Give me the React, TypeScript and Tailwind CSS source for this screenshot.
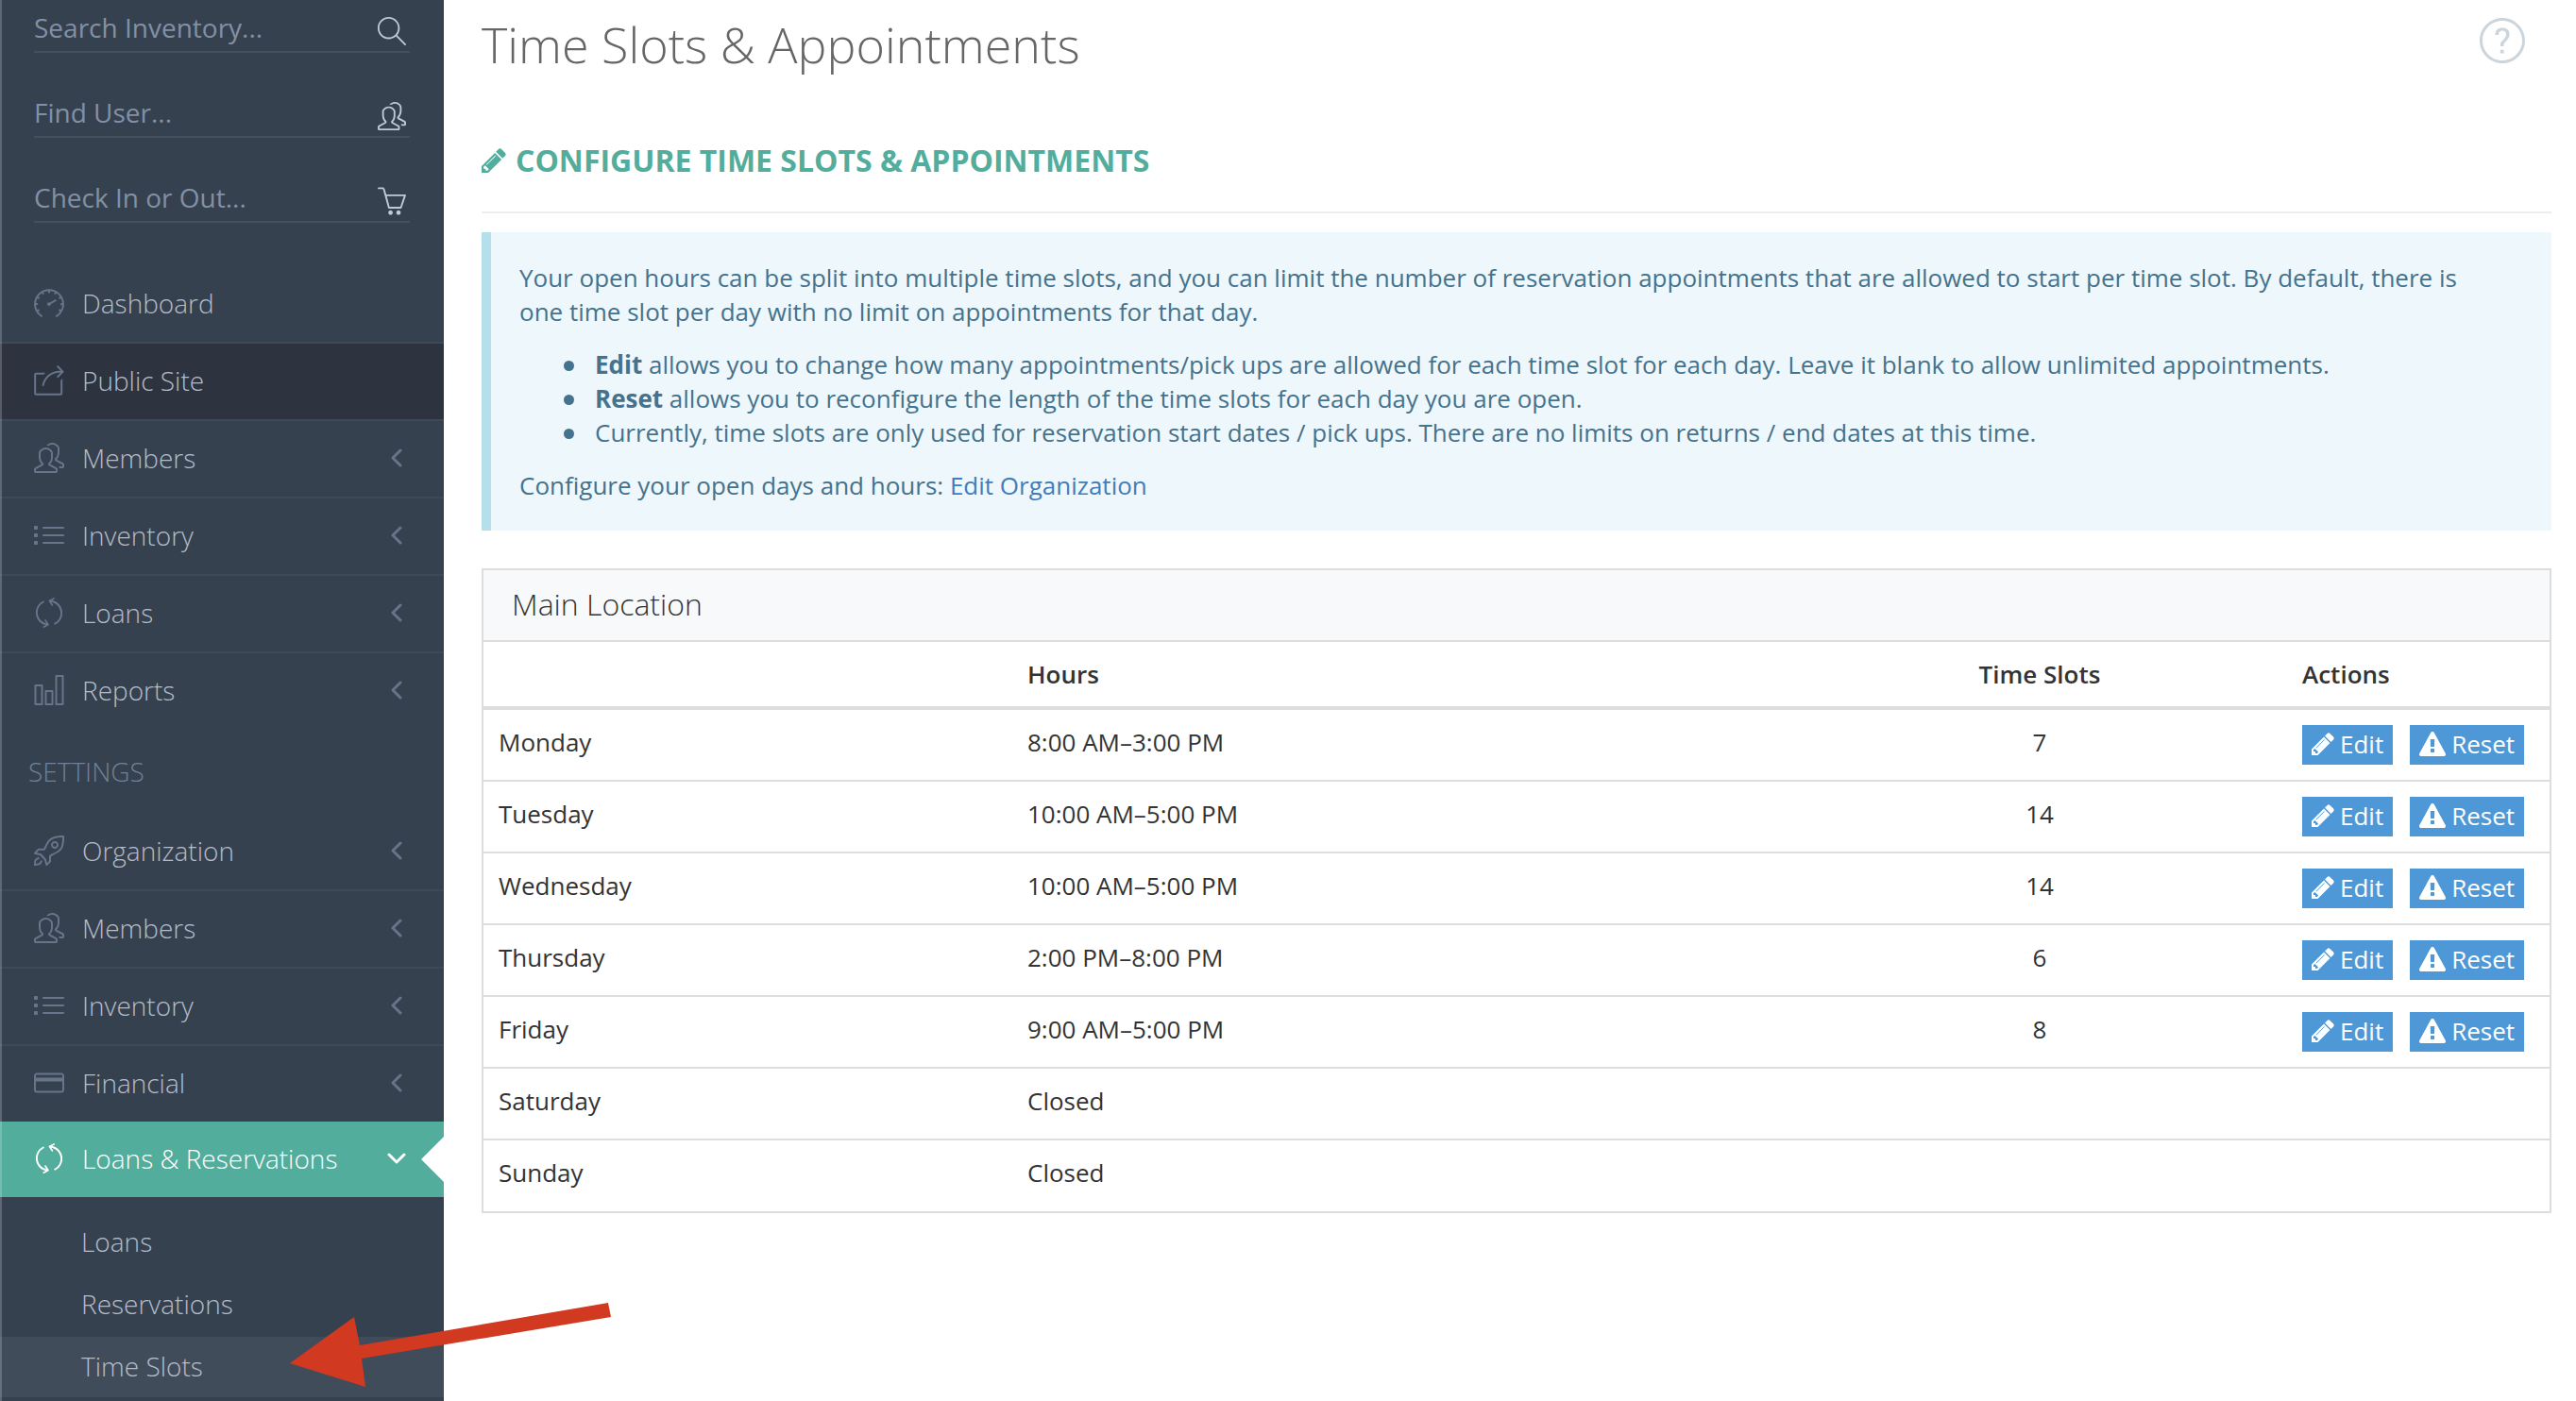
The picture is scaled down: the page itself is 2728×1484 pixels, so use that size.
import React from 'react';
import { IconType } from 'react-icons';
import {
  SlBasket,
  SlChart,
  SlCreditCard,
  SlList,
  SlMagnifier,
  SlPeople,
  SlQuestion,
  SlRefresh,
  SlRocket,
  SlShareAlt,
  SlSpeedometer,
} from 'react-icons/sl';

interface MenuItem {
  label: string;
  icon: IconType;
  children?: boolean;
  dark?: boolean;
}

interface DayRow {
  day: string;
  hours: string;
  slots?: number;
}

const searches: { id: string; label: string; icon: IconType }[] = [
  { id: 'search-inventory', label: 'Search Inventory...', icon: SlMagnifier },
  { id: 'find-user', label: 'Find User...', icon: SlPeople },
  { id: 'check-in-out', label: 'Check In or Out...', icon: SlBasket },
];

const mainMenu: MenuItem[] = [
  { label: 'Dashboard', icon: SlSpeedometer },
  { label: 'Public Site', icon: SlShareAlt, dark: true },
  { label: 'Members', icon: SlPeople, children: true },
  { label: 'Inventory', icon: SlList, children: true },
  { label: 'Loans', icon: SlRefresh, children: true },
  { label: 'Reports', icon: SlChart, children: true },
];

const settingsMenu: MenuItem[] = [
  { label: 'Organization', icon: SlRocket, children: true },
  { label: 'Members', icon: SlPeople, children: true },
  { label: 'Inventory', icon: SlList, children: true },
  { label: 'Financial', icon: SlCreditCard, children: true },
];

const subMenu = ['Loans', 'Reservations', 'Time Slots'];

const days: DayRow[] = [
  { day: 'Monday', hours: '8:00 AM–3:00 PM', slots: 7 },
  { day: 'Tuesday', hours: '10:00 AM–5:00 PM', slots: 14 },
  { day: 'Wednesday', hours: '10:00 AM–5:00 PM', slots: 14 },
  { day: 'Thursday', hours: '2:00 PM–8:00 PM', slots: 6 },
  { day: 'Friday', hours: '9:00 AM–5:00 PM', slots: 8 },
  { day: 'Saturday', hours: 'Closed' },
  { day: 'Sunday', hours: 'Closed' },
];

const PencilIcon = ({ className }: { className?: string }) => (
  <svg viewBox="128 128 1536 1536" fill="currentColor" className={className} aria-hidden="true">
    <path d="M491 1536l91-91-235-235-91 91v107h128v128h107zm523-928q0-22-22-22-10 0-17 7l-542 542q-7 7-7 17 0 22 22 22 10 0 17-7l542-542q7-7 7-17zm-54-192l416 416-832 832h-416v-416zm683 96q0 53-37 90l-166 166-416-416 166-165q36-38 90-38 53 0 91 38l235 234q37 39 37 91z" />
  </svg>
);

const WarningIcon = ({ className }: { className?: string }) => (
  <svg viewBox="0 0 1792 1664" fill="currentColor" className={className} aria-hidden="true">
    <path d="M1024 1375v-190q0-14-9.5-23.5t-22.5-9.5h-192q-13 0-22.5 9.5t-9.5 23.5v190q0 14 9.5 23.5t22.5 9.5h192q13 0 22.5-9.5t9.5-23.5zm-2-374l18-459q0-12-10-19-13-11-24-11h-220q-11 0-24 11-10 7-10 21l17 457q0 10 10 16.5t24 6.5h185q14 0 23.5-6.5t10.5-16.5zm-14-934l768 1408q35 63-2 126-17 29-46.5 46t-63.5 17h-1536q-34 0-63.5-17t-46.5-46q-37-63-2-126l768-1408q17-31 47-49t65-18 65 18 47 49z" />
  </svg>
);

const AngleIcon = ({ open }: { open?: boolean }) => (
  <svg
    viewBox="0 0 20 20"
    fill="none"
    stroke="currentColor"
    strokeWidth="3"
    strokeLinecap="round"
    strokeLinejoin="round"
    className="ml-auto size-5"
    aria-hidden="true"
  >
    {open ? <path d="M2 6l8 8 8-8" /> : <path d="M14 2l-8 8 8 8" />}
  </svg>
);

const MenuList = ({ items }: { items: MenuItem[] }) => (
  <ul>
    {items.map((item, i) => (
      <li key={item.label} className={i > 0 ? 'border-t-2 border-[#3e4959]' : 'border-t-2 border-transparent'}>
        <a
          href="#"
          className={`flex h-20 items-center pb-[2px] pl-9 pr-10 text-[28px] font-light text-[#b4bcc8] ${item.dark ? 'bg-[#2d3440]' : ''}`}
        >
          <item.icon className="mr-[19px] size-8 text-[#67748a]" />
          {item.label}
          {item.children && (
            <span className="ml-auto text-[#67748a]">
              <AngleIcon />
            </span>
          )}
        </a>
      </li>
    ))}
  </ul>
);

const Sidebar: React.FC = () => (
  <aside className="relative w-[470px] shrink-0 bg-[#364150]">
    <form className="flex flex-col gap-[34px] pl-9 pr-9">
      {searches.map(({ id, label, icon: Icon }) => (
        <div key={id} className="flex h-14 items-end border-b-2 border-[#435060] pr-1">
          <input
            id={id}
            type="text"
            aria-label={label}
            placeholder={label}
            className="h-full min-w-0 flex-1 bg-transparent pt-1 text-[28px] text-white outline-none placeholder:text-[#8290a5]"
          />
          <label htmlFor={id} className="mb-[6px] text-[#bfcad9]">
            <Icon className="size-[30px]" />
          </label>
        </div>
      ))}
    </form>

    <nav className="mt-11">
      <MenuList items={mainMenu} />
      <h3 className="flex h-[88px] items-center pl-[30px] pt-[2px] text-[28px] font-light uppercase text-[#708096]">Settings</h3>
      <MenuList items={settingsMenu} />

      {/* Active section */}
      <a href="#" className="relative flex h-20 items-center bg-[#52ad9c] pb-[2px] pl-9 pr-10 text-[28px] font-light text-white">
        <SlRefresh className="mr-[19px] size-8" />
        Loans &amp; Reservations
        <AngleIcon open />
        <svg viewBox="0 0 24 48" className="absolute right-0 top-4 h-12 w-6" fill="#fff" aria-hidden="true">
          <path d="M24 0v48L0 24z" />
        </svg>
      </a>
      <ul className="flex flex-col gap-[2px] pt-4">
        {subMenu.map(label => (
          <li key={label}>
            <a
              href="#"
              className={`flex h-16 items-center pb-[2px] pl-[86px] text-[28px] font-light text-[#b4bcc8] ${label === 'Time Slots' ? 'bg-[#414c5a]' : ''}`}
            >
              {label}
            </a>
          </li>
        ))}
      </ul>
    </nav>

    <div className="absolute inset-y-0 left-0 w-[2px] bg-white/20" />

    {/* Pointer to the current page */}
    <svg viewBox="0 0 342 92" className="absolute left-[306px] top-[1378px] z-10 h-[92px] w-[342px]" aria-hidden="true">
      <path d="M1 66L69 17L75 47L338 2L341 17L77 61L81 91Z" fill="#d13920" />
    </svg>
  </aside>
);

const noteItem = "relative before:absolute before:-left-[33px] before:top-[14px] before:size-[11px] before:rounded-full before:bg-[#45728c] before:content-['']";
const actionButton = 'flex h-[42px] items-center gap-[6px] bg-[#4f98d7] px-[10px] pb-[2px] text-white';

const App: React.FC = () => {
  return (
    <div className="flex min-h-screen bg-white font-['Open_Sans',sans-serif] text-[26px] leading-9 text-[#333]">
      <Sidebar />

      <main className="min-w-0 flex-1 pl-10 pr-[26px]">
        <div className="flex items-start justify-between pr-7">
          <h1 className="pt-3 text-[52px] font-light leading-[70px] text-[#666]">Time Slots &amp; Appointments</h1>
          <button type="button" aria-label="Help" className="mt-[19px] text-[#ccd5db]">
            <SlQuestion className="size-12" />
          </button>
        </div>

        <h2 className="mt-[60px] flex items-center border-b-2 border-[#eee] pb-[26px] text-[32px] font-bold uppercase leading-[56px] text-[#52ad9c]">
          <PencilIcon className="mr-[10px] size-[26px]" />
          Configure Time Slots &amp; Appointments
        </h2>

        <div className="mt-5 border-l-[10px] border-[#b3e0ea] bg-[#eef7fb] p-[30px] text-[#45728c]">
          <p className="pr-10">
            Your open hours can be split into multiple time slots, and you can limit the number of reservation appointments that are allowed to start per time slot. By default, there is one time slot per day with no limit on appointments for that day.
          </p>
          <ul className="my-5 pl-20">
            <li className={noteItem}><b>Edit</b> allows you to change how many appointments/pick ups are allowed for each time slot for each day. Leave it blank to allow unlimited appointments.</li>
            <li className={noteItem}><b>Reset</b> allows you to reconfigure the length of the time slots for each day you are open.</li>
            <li className={noteItem}>Currently, time slots are only used for reservation start dates / pick ups. There are no limits on returns / end dates at this time.</li>
          </ul>
          <p>
            Configure your open days and hours: <a href="#" className="text-[#417dba]">Edit Organization</a>
          </p>
        </div>

        <section className="mt-10 border-2 border-[#ddd]">
          <h3 className="border-b-2 border-[#ddd] bg-[#f8f9fb] px-[30px] pb-4 pt-[14px] text-[32px] font-light leading-[44px]">Main Location</h3>
          <table className="w-full table-fixed border-collapse text-left">
            <colgroup>
              <col className="w-[560px]" />
              <col />
              <col className="w-[524px]" />
              <col className="w-[278px]" />
            </colgroup>
            <thead>
              <tr className="border-b-4 border-[#ddd]">
                <th className="p-4"></th>
                <th className="p-4 font-semibold">Hours</th>
                <th className="p-4 text-center font-semibold">Time Slots</th>
                <th className="p-4 font-semibold">Actions</th>
              </tr>
            </thead>
            <tbody>
              {days.map(({ day, hours, slots }) => (
                <tr key={day} className="h-[76px] border-b-2 border-[#ddd] align-top last:border-b-0">
                  <td className="p-4">{day}</td>
                  <td className="p-4">{hours}</td>
                  <td className="p-4 text-center">{slots}</td>
                  <td className="p-4">
                    {slots && (
                      <div className="flex gap-[18px]">
                        <button type="button" className={actionButton}>
                          <PencilIcon className="size-6" />
                          Edit
                        </button>
                        <button type="button" className={actionButton}>
                          <WarningIcon className="h-[26px] w-7" />
                          Reset
                        </button>
                      </div>
                    )}
                  </td>
                </tr>
              ))}
            </tbody>
          </table>
        </section>
      </main>
    </div>
  );
};

export default App;
